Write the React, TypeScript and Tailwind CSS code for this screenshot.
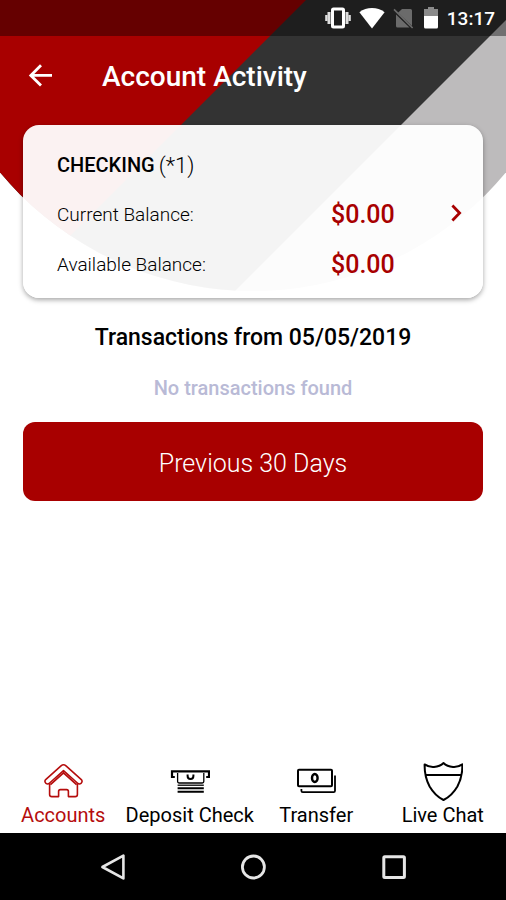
import type { ReactNode } from 'react';
import { clsx } from 'clsx';

const balances = [
  { label: 'Current Balance:', amount: '$0.00' },
  { label: 'Available Balance:', amount: '$0.00' },
];

function HouseIcon() {
  return (
    <svg viewBox="0 0 40 40" className="size-10" fill="none" stroke="currentColor" strokeWidth="1.6" strokeLinejoin="round">
      <path d="M2.4 18.8 18 4.8Q20.5 2.8 23 4.8L38.6 18.8Q39.8 20.8 38 22.4Q36.2 23.8 34.4 22L20.5 9.6 6.6 22Q4.8 23.8 3 22.4Q1.2 20.8 2.4 18.8Z" />
      <path d="M6.6 22.4V33.4Q6.6 35.6 8.8 35.6H15.6V30.4Q15.6 28.6 17.4 28.6H23.6Q25.4 28.6 25.4 30.4V35.6H32.2Q34.4 35.6 34.4 33.4V22.4" />
      <path d="M7.4 23.6 20.5 11.8 33.6 23.6" strokeWidth="1.8" />
    </svg>
  );
}

function DepositIcon() {
  return (
    <svg viewBox="0 0 40 40" className="size-10" fill="none" stroke="currentColor" strokeWidth="2.2">
      <path d="M4.8 16H2V10.4H39V16H36.2" />
      <path d="M7.6 12V20.6Q7.6 22 9 22H32.4Q33.8 22 33.8 20.6V12" strokeWidth="1.3" />
      <path d="M17.6 13.4V15Q17.6 18 20.5 18T23.4 15V13.4" strokeWidth="2" />
      <path d="M7.6 24.2H33.8" strokeWidth="1.3" />
      <path d="M7.6 27.2H33.8M7.6 30.8H33.8" strokeWidth="2" />
    </svg>
  );
}

function CashIcon() {
  return (
    <svg viewBox="0 0 40 40" className="size-10" fill="none" stroke="currentColor" strokeWidth="2">
      <rect x="2" y="8.8" width="34" height="16.4" rx="1" />
      <ellipse cx="18.8" cy="17" rx="2.8" ry="4" strokeWidth="2.4" />
      <path d="M39 14.6V29.8Q39 31.2 37.6 31.2H6.8Q5.4 31.2 5.4 29.8V28" strokeWidth="1.8" />
    </svg>
  );
}

function ShieldIcon() {
  return (
    <svg viewBox="0 0 40 40" className="size-10" fill="none" stroke="currentColor" strokeWidth="2" strokeLinejoin="round">
      <path d="M1.6 3.4Q6 6.4 11 6Q17 5.4 20.5 2Q24 5.4 30 6Q35 6.4 39.4 3.4Q39.6 16 34.4 25.4Q29 34.6 20.5 39Q12 34.6 6.6 25.4Q1.4 16 1.6 3.4Z" />
      <path d="M2.4 14H38.6" strokeWidth="2.2" />
    </svg>
  );
}

const tabs: { label: string; icon: ReactNode; active?: boolean }[] = [
  { label: 'Accounts', icon: <HouseIcon />, active: true },
  { label: 'Deposit Check', icon: <DepositIcon /> },
  { label: 'Transfer', icon: <CashIcon /> },
  { label: 'Live Chat', icon: <ShieldIcon /> },
];

// Curved red / charcoal / grey banner behind the header and the card
function Backdrop() {
  return (
    <svg viewBox="0 0 506 292" className="absolute inset-x-0 top-0 w-full" aria-hidden="true">
      <clipPath id="curve">
        <circle cx="253" cy="-38" r="329" />
      </clipPath>
      <g clipPath="url(#curve)">
        <rect width="506" height="292" fill="#bdbbbc" />
        <path d="M0 0H526L234 292H0Z" fill="#333333" />
        <path d="M0 0H306L14 292H0Z" fill="#a80000" />
      </g>
    </svg>
  );
}

function StatusBar() {
  return (
    <div className="flex h-9 items-center justify-end gap-2 bg-black/40 pr-[11px] text-white">
      <svg viewBox="0 0 26 22" className="h-[22px] w-[26px]" fill="none" stroke="currentColor">
        <rect x="7.5" y="2" width="11" height="18" rx="1" strokeWidth="3" />
        <path d="M4 5V17M22 5V17" strokeWidth="3" stroke="#dddddd" />
        <path d="M1.4 8V14M24.6 8V14" strokeWidth="2.4" stroke="#dddddd" />
      </svg>
      <svg viewBox="0 0 26 22" className="h-[22px] w-[26px]" fill="currentColor">
        <path d="M0.4 5.2Q6 1 13 1T25.6 5.2L13 21.4Z" />
      </svg>
      <svg viewBox="0 0 22 22" className="size-[22px]">
        <path d="M9 2H17.5Q19 2 19 3.5V19L5 5.8ZM3 7.6 16.5 20.6H4.5Q3 20.6 3 19Z" fill="#6b6b6b" />
        <path d="M1 2.4 19.6 21" stroke="#6b6b6b" strokeWidth="1.6" />
      </svg>
      <svg viewBox="0 0 16 22" className="h-[22px] w-4">
        <path d="M5 0H11V2H15V10H1V2H5Z" fill="#8a8a8a" />
        <path d="M1 9H15V20Q15 21.5 13.5 21.5H2.5Q1 21.5 1 20Z" fill="currentColor" />
      </svg>
      <span className="pt-px text-[19px] leading-6 font-medium">13:17</span>
    </div>
  );
}

function Header() {
  return (
    <header className="mb-[9px] flex h-20 items-center pl-7 text-white">
      <button type="button" aria-label="Back" className="mr-[49px]">
        <svg viewBox="0 0 25 24" className="h-6 w-[25px]" fill="none" stroke="currentColor" strokeWidth="2.8">
          <path d="M24 11.4H3M13 1.2 2.8 11.4 13 21.6" />
        </svg>
      </button>
      <h1 className="pt-px text-[28px] leading-8 font-medium">Account Activity</h1>
    </header>
  );
}

function AccountCard() {
  return (
    <section className="flex items-center rounded-2xl bg-white/95 pt-[15px] pr-[17px] pb-2 pl-[34px] shadow-[0_2px_5px_rgba(0,0,0,0.35)]">
      <div className="flex-1">
        <h2 className="flex h-[50px] items-center gap-1 text-[20px] font-medium">
          CHECKING <span className="text-[22px] font-light">(*1)</span>
        </h2>
        <dl>
          {balances.map(({ label, amount }) => (
            <div key={label} className="flex h-[50px] items-center">
              <dt className="flex-1 text-[19px] font-light">{label}</dt>
              <dd className="w-[115px] text-[25px] font-medium text-[#a80000]">{amount}</dd>
            </div>
          ))}
        </dl>
      </div>
      <button type="button" aria-label="Account details" className="mb-1 text-[#a80000]">
        <svg viewBox="0 0 20 20" className="size-5" fill="none" stroke="currentColor" strokeWidth="2.8">
          <path d="M6.4 2.6 13.6 10 6.4 17.4" />
        </svg>
      </button>
    </section>
  );
}

function TabBar() {
  return (
    <nav className="grid grid-cols-4 pb-1">
      {tabs.map(({ label, icon, active }) => (
        <a
          key={label}
          href="#"
          className={clsx(
            'flex flex-col items-center text-[20px] leading-7 whitespace-nowrap',
            active ? 'text-[#b50d0d]' : 'text-black',
          )}
        >
          {icon}
          {label}
        </a>
      ))}
    </nav>
  );
}

function SystemNav() {
  return (
    <div className="flex h-[67px] items-center justify-center gap-28 bg-black text-[#e6e6e6]">
      <button type="button" aria-label="System back">
        <svg viewBox="0 0 28 28" className="size-7" fill="none" stroke="currentColor" strokeWidth="2.6" strokeLinejoin="round">
          <path d="M24.4 2.6V25.4L3.4 14Z" />
        </svg>
      </button>
      <button type="button" aria-label="Home">
        <svg viewBox="0 0 28 28" className="size-7" fill="none" stroke="currentColor" strokeWidth="2.8">
          <circle cx="14.4" cy="14" r="11" />
        </svg>
      </button>
      <button type="button" aria-label="Recent apps">
        <svg viewBox="0 0 28 28" className="size-7" fill="none" stroke="currentColor" strokeWidth="3">
          <rect x="4.8" y="3.8" width="20.6" height="20.6" rx="1" />
        </svg>
      </button>
    </div>
  );
}

export default function App() {
  return (
    <div className="relative flex min-h-screen flex-col bg-white font-[Roboto,sans-serif] text-black">
      <Backdrop />
      <div className="relative flex flex-1 flex-col">
        <StatusBar />
        <Header />
        <main className="flex flex-1 flex-col px-[23px]">
          <AccountCard />
          <h2 className="mt-6 text-center text-[23px] leading-8 font-medium">Transactions from 05/05/2019</h2>
          <p className="mt-[22px] text-center text-[20px] leading-6 font-medium text-[#b9bad6]">No transactions found</p>
          <button type="button" className="mt-[22px] h-[79px] rounded-xl bg-[#a80000] pt-1 text-[25px] font-light text-white">
            Previous 30 Days
          </button>
        </main>
        <TabBar />
        <SystemNav />
      </div>
    </div>
  );
}
